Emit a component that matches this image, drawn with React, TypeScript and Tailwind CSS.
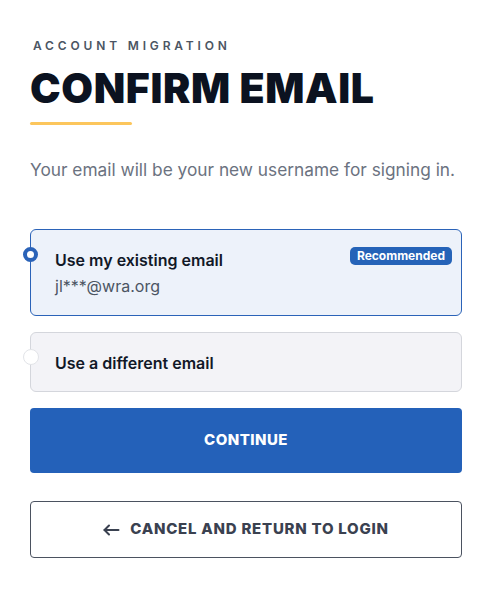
import React from "react";

export default function App() {
  return (
    <div className="min-h-[602px] w-full bg-white px-[30px] pt-[38px] pb-10" style={{ fontFamily: "Inter, 'Noto Sans', sans-serif" }}>
      <div className="text-[12px] font-semibold uppercase tracking-[0.32em] text-[#4b5563] leading-[16px] pl-[3px]">
        Account Migration
      </div>
      <h1 className="mt-[10px] text-[41px] leading-[48px] font-black uppercase text-[#0b1220] tracking-[0.015em]">
        Confirm Email
      </h1>
      <div className="mt-[10px] h-[3px] w-[102px] bg-[#fcc65c] rounded-full" />
      <p className="mt-[33px] text-[17.3px] leading-[24px] text-[#6b7280]">
        Your email will be your new username for signing in.
      </p>

      <div className="mt-[47px] flex flex-col gap-[16px]">
        <div className="relative h-[87px] rounded-[6px] border border-[#2b63b8] bg-[#edf2fa] pl-[24px] pt-[18px]">
          <span className="absolute left-[-8px] top-[17px] h-[15px] w-[15px] rounded-full border-[4px] border-[#2b63b8] bg-white" />
          <span className="absolute right-[9px] top-[17px] rounded-[5px] bg-[#2563b8] px-[7px] text-[12px] leading-[18px] font-bold text-white">
            Recommended
          </span>
          <div className="text-[16px] leading-[24px] font-semibold text-[#111827]">Use my existing email</div>
          <div className="mt-[2px] text-[16px] leading-[24px] text-[#4b5563]">jl***@wra.org</div>
        </div>

        <div className="relative h-[60px] rounded-[6px] border border-[#d4d6dc] bg-[#f3f3f7] pl-[24px] flex items-center">
          <span className="absolute left-[-8px] top-[16px] h-[16px] w-[16px] rounded-full border border-[#e2e4e8] bg-white" />
          <div className="pt-[1px] text-[16px] leading-[24px] font-semibold text-[#111827]">Use a different email</div>
        </div>
      </div>

      <button className="mt-[16px] flex h-[65px] w-full items-center justify-center rounded-[4px] bg-[#2461b9] text-[15px] font-extrabold uppercase tracking-[0.03em] text-white">
        Continue
      </button>

      <button className="mt-[28px] flex h-[57px] w-full items-center justify-center gap-[10px] rounded-[4px] border border-[#4b5260] bg-white text-[15px] font-extrabold uppercase tracking-[0.05em] text-[#3a4150]">
        <svg width="17" height="16" viewBox="0 0 17 16" fill="none" stroke="currentColor" strokeWidth="2" strokeLinecap="round" strokeLinejoin="round">
          <path d="M15.5 8H1.5" />
          <path d="M6 3.5L1.5 8L6 12.5" />
        </svg>
        Cancel and return to login
      </button>
    </div>
  );
}
